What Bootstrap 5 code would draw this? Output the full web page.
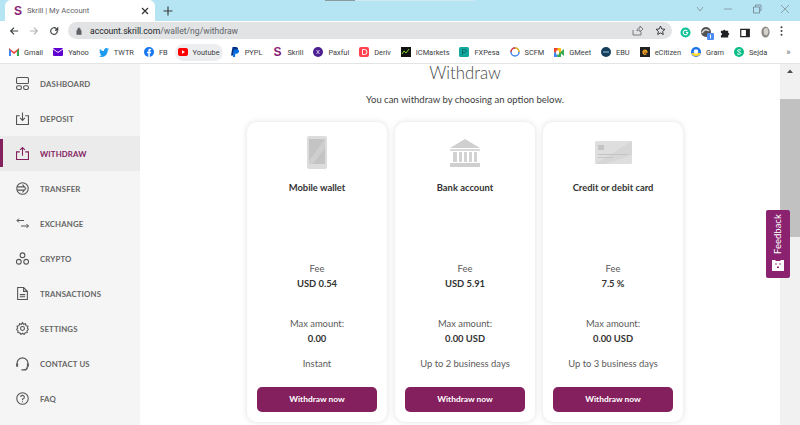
<!DOCTYPE html>
<html lang="en">
<head>
    <meta charset="UTF-8">
    <title>Skrill | My Account</title>
    <link href="https://cdn.jsdelivr.net/npm/bootstrap@5.3.0/dist/css/bootstrap.min.css" rel="stylesheet">
    <style>
        html, body { height: 425px; overflow: hidden; }
        body { font-family: Lato, sans-serif; color: #3c3c3c; background: #fff; }
        .tabstrip { height: 21px; background: #b5e5f2 linear-gradient(to right, #8d9a9e 30px, #cfe9f0 30px) no-repeat 325px 0 / 150px 1px; padding-left: 5px; }
        .tab-item { width: 150px; height: 21px; background: #fff; border-radius: 6px 6px 0 0; padding: 0 6px 0 8px; font: 7.6px Roboto, sans-serif; color: #5f6368; }
        .skrill-s { font: 700 12px "Liberation Sans", sans-serif; color: #8b2274; width: 10px; text-align: center; }
        .newtab { margin-left: 8px; width: 14px; }
        .winctl { margin-left: auto; gap: 18.5px; padding-right: 10px; }
        .toolbar { height: 20px; padding-left: 9px; }
        .navicons { gap: 10px; width: 59px; }
        .omnibox { width: 604px; height: 17px; margin-top: -1px; background: #e1e3e5; border-radius: 9px; padding: 0 6px 0 8px; font: 8.6px Roboto, sans-serif; color: #5f6368; }
        .omnibox b { font-weight: 400; color: #202124; }
        .exticons { padding-left: 8px; }
        .ext-slot { width: 20px; }
        .bookmarks { height: 23px; padding-left: 9px; border-bottom: 1px solid #e3e4e6; font: 7.4px Roboto, sans-serif; color: #3c4043; white-space: nowrap; }
        .bm-item { gap: 5px; margin-right: 10px; height: 17px; }
        .bm-on { background: #eceef0; border-radius: 9px; padding: 0 3px; margin: 0 7px 0 -3px; }
        .bm-more { margin-left: 9px; color: #5f6368; font-size: 9px; }
        .pagewrap { height: 361px; position: relative; }
        .sidemenu { width: 140px; background: #f5f5f5; padding-top: 2px; font: 700 7.8px Lato, sans-serif; letter-spacing: .15px; color: #666; }
        .side-row { height: 35px; padding-left: 16px; gap: 11px; position: relative; }
        .side-row.on { background: #ebebeb; color: #85205f; }
        .side-row.on::before { content: ""; position: absolute; left: 0; top: 3px; bottom: 4px; width: 2.5px; background: #85205f; }
        .mainpane { width: 640px; padding-left: 10px; text-align: center; }
        .pagetitle { font: 300 16.8px Lato, sans-serif; color: #4a4a4a; margin: -1px 0 0; line-height: 20px; }
        .pagesub { font-size: 9.5px; line-height: 14px; margin: 10px 0 0; }
        .optlist { gap: 8px; margin: 15px 0 0 97px; }
        .optcard { width: 140px; height: 300px; border: 0; border-radius: 10px; box-shadow: 0 0 6px rgba(0,0,0,.13); padding: 0 10px; font-size: 9.4px; color: #5a5a5a; }
        .opticon { height: 33px; margin-top: 14px; }
        .opttitle { font-weight: 700; color: #333; line-height: 14px; margin-top: 12px; height: 81px; }
        .optline { line-height: 14px; }
        .optval { font-weight: 700; color: #333; line-height: 14px; margin-top: 1px; }
        .gap-fee { height: 26px; }
        .gap-max { height: 11px; }
        .btn-wd { height: 25px; width: 120px; margin-top: 16px; padding: 0; background: #85205f; border: 0; border-radius: 5px; color: #fff; font-size: 8.4px; font-weight: 700; }
        .scrolltrack { width: 20px; background: #f1f1f1; }
        .scroll-up { display: block; margin: 4px auto 0; }
        .scrollthumb { height: 138px; margin-top: 25px; background: #c1c1c1; }
        .feedback-tab { position: absolute; right: 10px; top: 146px; width: 24px; height: 68px; background: #8a2270; border-radius: 2px; color: #fff; font-size: 9.5px; padding-top: 8px; }
        .feedback-tab span { writing-mode: vertical-rl; transform: rotate(180deg); line-height: 24px; height: 36px; }
        .feedback-face { margin-top: 6px; }
    </style>
</head>
<body>
<div class="tabstrip d-flex align-items-end">
    <div class="tab-item d-flex align-items-center">
        <span class="skrill-s">S</span><span class="flex-grow-1 ps-1">Skrill | My Account</span>
        <svg width="8" height="8" viewBox="0 0 8 8"><path d="M1 1l6 6M7 1L1 7" stroke="#303134" stroke-width="1.2"/></svg>
    </div>
    <div class="newtab align-self-center d-flex">
        <svg width="10" height="10" viewBox="0 0 10 10"><path d="M5 .5v9M.5 5h9" stroke="#3c4043" stroke-width="1.2"/></svg>
    </div>
    <div class="winctl d-flex align-items-center align-self-start pt-1">
        <svg width="10" height="10" viewBox="0 0 10 10"><path d="M2 3l3 4 3-4" fill="none" stroke="#8aa2ab"/></svg>
        <svg width="10" height="10" viewBox="0 0 10 10"><path d="M1 5h8" stroke="#8aa2ab"/></svg>
        <svg width="10" height="10" viewBox="0 0 10 10"><path d="M1.500 3h6v6h-6zM3.500 3V1h5.500v5.500H7.500" fill="none" stroke="#7d959e"/></svg>
        <svg width="10" height="10" viewBox="0 0 10 10"><path d="M1 1l8 8M9 1L1 9" stroke="#8aa2ab"/></svg>
    </div>
</div>
<div class="toolbar d-flex align-items-center">
    <div class="navicons d-flex align-items-center">
        <svg width="10" height="10" viewBox="0 0 12 12"><path d="M11 6H2M6 2L2 6l4 4" fill="none" stroke="#3c4043" stroke-width="1.4"/></svg>
        <svg width="10" height="10" viewBox="0 0 12 12"><path d="M1 6h9M6 2l4 4-4 4" fill="none" stroke="#b4b6b8" stroke-width="1.4"/></svg>
        <svg width="10" height="10" viewBox="0 0 12 12"><path d="M10 6a4 4 0 1 1-1.200-2.800L10.500 5M10.500 1.500V5H7" fill="none" stroke="#3c4043" stroke-width="1.4"/></svg>
    </div>
    <div class="omnibox d-flex align-items-center">
        <svg class="me-1" width="6" height="8" viewBox="0 0 7 9"><path d="M1 4h5v4.500H1zM2 4V2.500a1.500 1.500 0 0 1 3 0V4" fill="#5f6368" stroke="#5f6368" stroke-width=".8"/></svg>
        <span class="flex-grow-1 ps-1"><b>account.skrill.com</b>/wallet/ng/withdraw</span>
        <svg class="me-2" width="11" height="11" viewBox="0 0 11 11"><path d="M1 5v5h8V7M5 6c0-2 1-3 3-3V1l3 3-3 3V5C6.500 5 5.500 5.500 5 6z" fill="none" stroke="#5f6368" stroke-width=".8"/></svg>
        <svg class="ms-1" width="11" height="11" viewBox="0 0 11 11"><path d="M5.500 1l1.300 3 3.200.3-2.400 2.100.7 3.100-2.800-1.600-2.800 1.600.7-3.100L1 4.300 4.200 4z" fill="none" stroke="#3c4043"/></svg>
    </div>
    <div class="exticons d-flex align-items-center">
        <div class="ext-slot"><svg width="11" height="11" viewBox="0 0 12 12"><circle cx="6" cy="6" r="5.500" fill="#15c39a"/><path d="M8 4.500A2.500 2.500 0 1 0 8.500 6H6.500" fill="none" stroke="#fff" stroke-width="1.100"/></svg></div>
        <div class="ext-slot"><svg width="14" height="14" viewBox="0 0 14 14"><circle cx="6" cy="6" r="5" fill="#555"/><path d="M2 7c2-4 5-4 7-2" fill="none" stroke="#ddd" stroke-width="1.500"/><rect x="7" y="7" width="7" height="7" rx="1" fill="#4d8cf5"/><path d="M10.500 8.500v4" stroke="#fff"/></svg></div>
        <div class="ext-slot"><svg width="10" height="10" viewBox="0 0 11 11"><path d="M1 3h2.500a1.200 1.200 0 0 1 2.400 0H9v2.500a1.200 1.200 0 0 1 0 2.400V10.500H1V8a1.200 1.200 0 0 0 0-2.500z" fill="#202124"/></svg></div>
        <div class="ext-slot"><svg width="10" height="10" viewBox="0 0 11 11"><path d="M.8 1.500h9.400v8H.8z" fill="none" stroke="#202124" stroke-width="1.300"/><path d="M6.500 1.500h3.700v8H6.500z" fill="#202124"/></svg></div>
        <div class="ext-slot"><svg width="11" height="13" viewBox="0 0 12 14"><ellipse cx="6" cy="6.500" rx="4.500" ry="6" fill="#8d8a86"/><ellipse cx="6.500" cy="6" rx="2.500" ry="4" fill="#d4d0cb"/></svg></div>
        <svg width="3" height="10" viewBox="0 0 3 11"><circle cx="1.500" cy="1.500" r="1.100" fill="#3c4043"/><circle cx="1.500" cy="5.500" r="1.100" fill="#3c4043"/><circle cx="1.500" cy="9.500" r="1.100" fill="#3c4043"/></svg>
    </div>
</div>
<div class="bookmarks d-flex align-items-center">
    <div class="bm-item d-flex align-items-center"><svg width="10" height="8" viewBox="0 0 10 8"><path d="M0 8V0l5 4 5-4v8H8V3.500L5 6 2 3.500V8z" fill="#ea4335"/><path d="M0 8V1l2 2v5z" fill="#4285f4"/><path d="M8 8V3l2-2v7z" fill="#34a853"/></svg><span>Gmail</span></div>
    <div class="bm-item d-flex align-items-center"><svg width="10" height="8" viewBox="0 0 10 8"><rect width="10" height="8" rx="1" fill="#5f01d1"/><path d="M0 1l5 3.500L10 1" fill="none" stroke="#fff" stroke-width=".9"/></svg><span>Yahoo</span></div>
    <div class="bm-item d-flex align-items-center"><svg width="10" height="9" viewBox="0 0 10 9"><path d="M10 1.200L8.800 2C8.800 6 6 9 3 9 1.800 9 .8 8.700 0 8c1 .1 2-.2 2.800-.8C2 7 1.300 6.600 1 5.700h.9C1 5.300.5 4.500.5 3.500l.9.300C.6 3 .4 1.800 1 .9c1 1.300 2.400 2 4 2.100C4.800 1.400 6 0 7.200 0c.7 0 1.200.3 1.600.7L10 .3l-.6 1z" fill="#1d9bf0"/></svg><span>TWTR</span></div>
    <div class="bm-item d-flex align-items-center"><svg width="10" height="10" viewBox="0 0 10 10"><circle cx="5" cy="5" r="5" fill="#1877f2"/><path d="M4.300 10V6.300H3V4.800h1.300V3.700C4.300 2.400 5 1.800 6.200 1.800l1 .1v1.300h-.6c-.6 0-.8.300-.8.800v.8h1.400L7 6.300H5.800V10z" fill="#fff"/></svg><span>FB</span></div>
    <div class="bm-item bm-on d-flex align-items-center"><svg width="10" height="8" viewBox="0 0 10 8"><rect width="10" height="8" rx="2" fill="#f00"/><path d="M4 2.200L7 4 4 5.800z" fill="#fff"/></svg><span>Youtube</span></div>
    <div class="bm-item d-flex align-items-center"><svg width="10" height="10" viewBox="0 0 10 10"><path d="M2.500 0h3.300c1.700 0 2.500 1 2.200 2.400C7.700 4 6.500 5 5 5H3.800l-.6 3.500H1z" fill="#003087"/><path d="M3.800 2.500h3.500C8.800 2.500 9.300 3.600 9 4.800 8.700 6 7.700 6.800 6.300 6.800H5.300L4.900 10H2.900z" fill="#0070e0"/></svg><span>PYPL</span></div>
    <div class="bm-item d-flex align-items-center"><span class="skrill-s">S</span><span>Skrill</span></div>
    <div class="bm-item d-flex align-items-center"><svg width="10" height="10" viewBox="0 0 10 10"><circle cx="5" cy="5" r="5" fill="#4b1f8f"/><path d="M3.500 3l3 4M6.500 3l-3 4" stroke="#c9b6ec"/></svg><span>Paxful</span></div>
    <div class="bm-item d-flex align-items-center"><svg width="10" height="10" viewBox="0 0 10 10"><rect width="10" height="10" rx="2" fill="#ff444f"/><path d="M3.500 2.500h2a2.500 2.500 0 0 1 0 5h-2z" fill="none" stroke="#fff"/></svg><span>Deriv</span></div>
    <div class="bm-item d-flex align-items-center"><svg width="10" height="10" viewBox="0 0 10 10"><rect width="10" height="10" fill="#111"/><path d="M1 7l2-3 2 2 3-4" fill="none" stroke="#7ed321"/></svg><span>ICMarkets</span></div>
    <div class="bm-item d-flex align-items-center"><svg width="10" height="10" viewBox="0 0 10 10"><rect width="10" height="10" rx="1.500" fill="#13a89e"/><path d="M3.500 8V2.500h2.200a1.300 1.300 0 0 1 0 3H3.500" fill="none" stroke="#0b6e68"/></svg><span>FXPesa</span></div>
    <div class="bm-item d-flex align-items-center"><svg width="10" height="10" viewBox="0 0 10 10"><circle cx="5" cy="5" r="4" fill="none" stroke="#4285f4" stroke-width="1.500"/><path d="M1 5a4 4 0 0 1 4-4" fill="none" stroke="#ea4335" stroke-width="1.500"/><path d="M5 1a4 4 0 0 1 4 4" fill="none" stroke="#fbbc05" stroke-width="1.500"/></svg><span>SCFM</span></div>
    <div class="bm-item d-flex align-items-center"><svg width="10" height="9" viewBox="0 0 10 9"><rect width="7" height="9" rx="1" fill="#fbbc05"/><rect width="3.500" height="4.500" fill="#ea4335"/><rect y="4.500" width="3.500" height="4.500" fill="#4285f4"/><rect x="3.500" y="4.500" width="3.500" height="4.500" fill="#34a853"/><rect x="2.200" y="2.500" width="2.800" height="4" fill="#fff"/><path d="M7 3.500L10 1v7L7 5.500z" fill="#34a853"/></svg><span>GMeet</span></div>
    <div class="bm-item d-flex align-items-center"><svg width="10" height="10" viewBox="0 0 10 10"><circle cx="5" cy="5" r="5" fill="#153e5c"/><path d="M2 5h6" stroke="#9fc2d8"/></svg><span>EBU</span></div>
    <div class="bm-item d-flex align-items-center"><svg width="10" height="10" viewBox="0 0 10 10"><rect width="10" height="10" fill="#222"/><path d="M3 5h4a2 2 0 1 0-.6 1.700" fill="none" stroke="#f5a623" stroke-width="1.300"/></svg><span>eCitizen</span></div>
    <div class="bm-item d-flex align-items-center"><svg width="10" height="10" viewBox="0 0 10 10"><circle cx="5" cy="5" r="5" fill="#1a73e8"/><path d="M.3 6h9.400A5 5 0 0 1 .3 6z" fill="#fdd835"/><circle cx="5" cy="4.500" r="2.300" fill="#fff"/></svg><span>Gram</span></div>
    <div class="bm-item d-flex align-items-center"><svg width="10" height="10" viewBox="0 0 10 10"><circle cx="5" cy="5" r="5" fill="#0bbd87"/><path d="M7 3.300C6 2.500 3.500 2.500 3.500 3.800S6.800 5 6.800 6.300 4 7.500 3 6.700" fill="none" stroke="#fff"/></svg><span>Sejda</span></div>
    <span class="bm-more">»</span>
</div>
<div class="pagewrap d-flex">
    <nav class="sidemenu">
        <div class="side-row d-flex align-items-center"><svg width="13" height="13" viewBox="0 0 12 12" fill="none" stroke="#555" stroke-width="1"><rect x=".5" y=".5" width="11" height="5.500" rx="1"/><rect x=".5" y="8" width="4.500" height="3.500" rx="1.500"/><rect x="7" y="8" width="4.500" height="3.500" rx="1.500"/></svg><span>DASHBOARD</span></div>
        <div class="side-row d-flex align-items-center"><svg width="13" height="13" viewBox="0 0 12 12" fill="none" stroke="#555" stroke-width="1"><path d="M3.500 3.500H.5v8h11v-8h-3M6 .5v7M3.800 5.500L6 7.800l2.200-2.300"/></svg><span>DEPOSIT</span></div>
        <div class="side-row on d-flex align-items-center"><svg width="13" height="13" viewBox="0 0 12 12" fill="none" stroke="#85205f" stroke-width="1"><path d="M3.500 4.500H.5v7h11v-7h-3M6 8V.5M3.800 2.700L6 .5l2.200 2.200"/></svg><span>WITHDRAW</span></div>
        <div class="side-row d-flex align-items-center"><svg width="13" height="13" viewBox="0 0 12 12" fill="none" stroke="#555" stroke-width="1"><circle cx="6" cy="6" r="5.300"/><path d="M1 4.500h6.500M1 7.500h6.500M6 2.500L9 6 6 9.500"/></svg><span>TRANSFER</span></div>
        <div class="side-row d-flex align-items-center"><svg width="13" height="13" viewBox="0 0 13 12" fill="none" stroke="#555" stroke-width="1"><path d="M8 3H1M3 1L1 3l2 2M5 8.500h7.500M10.500 6.500l2 2-2 2"/></svg><span>EXCHANGE</span></div>
        <div class="side-row d-flex align-items-center"><svg width="13" height="13" viewBox="0 0 12 12" fill="none" stroke="#555" stroke-width="1"><circle cx="6" cy="3" r="2.200"/><circle cx="2.600" cy="9" r="2.200"/><circle cx="9.400" cy="9" r="2.200"/></svg><span>CRYPTO</span></div>
        <div class="side-row d-flex align-items-center"><svg width="13" height="13" viewBox="0 0 12 12" fill="none" stroke="#555" stroke-width="1"><path d="M1.500.5h5.500l3.500 3.500v7.500h-9zM7 .5V4h3.500M3.500 7h5M3.500 9h5"/></svg><span>TRANSACTIONS</span></div>
        <div class="side-row d-flex align-items-center"><svg width="13" height="13" viewBox="0 0 12 12" fill="none" stroke="#555" stroke-width="1"><circle cx="6" cy="6" r="1.800"/><path d="M6 .5l1 1.600 1.800-.5.400 1.800 1.800.5-.5 1.800L11.500 7l-1.400 1 .2 1.800-1.800.2-1 1.500L6 10.400 4.500 11.500l-1-1.500-1.800-.2.200-1.800L.5 7l1-1.300L1 3.900l1.800-.5.400-1.800 1.800.5z"/></svg><span>SETTINGS</span></div>
        <div class="side-row d-flex align-items-center"><svg width="13" height="14" viewBox="0 0 12 13" fill="none" stroke="#555" stroke-width="1"><path d="M1.500 8A5 5 0 1 1 10.500 8"/><path d="M1 6v3M11 6v3" stroke-width="1.800"/><path d="M10.500 9c0 2-1.500 3-3.500 3H5" stroke-width="1.300"/></svg><span>CONTACT US</span></div>
        <div class="side-row d-flex align-items-center"><svg width="13" height="13" viewBox="0 0 12 12" fill="none" stroke="#555" stroke-width="1"><circle cx="6" cy="6" r="5.300"/><path d="M4.300 4.700A1.700 1.700 0 1 1 6 6.500V7.500M6 8.500v1"/></svg><span>FAQ</span></div>
    </nav>
    <main class="mainpane">
        <h1 class="pagetitle">Withdraw</h1>
        <p class="pagesub">You can withdraw by choosing an option below.</p>
        <div class="optlist d-flex">
            <div class="card optcard align-items-center">
                <div class="opticon d-flex align-items-center"><svg width="20" height="33" viewBox="0 0 20 33"><rect width="20" height="33" rx="2" fill="#dcdcdc"/><rect x="2" y="3" width="16" height="25" fill="#c4c4c4"/><path d="M18 3v9L6 28H2v-3z" fill="#cfcfcf"/></svg></div>
                <div class="opttitle">Mobile wallet</div>
                <div class="optline">Fee</div><div class="optval">USD 0.54</div>
                <div class="gap-fee"></div>
                <div class="optline">Max amount:</div><div class="optval">0.00</div>
                <div class="gap-max"></div>
                <div class="optline">Instant</div>
                <button class="btn btn-wd">Withdraw now</button>
            </div>
            <div class="card optcard align-items-center">
                <div class="opticon d-flex align-items-center"><svg width="30" height="28" viewBox="0 0 30 28"><path d="M15 0l15 9H0z" fill="#cfcfcf"/><rect y="10" width="30" height="2" fill="#d8d8d8"/><path d="M3 13h4v10H3zM9 13h3v10H9zM14 13h3v10h-3zM19 13h3v10h-3zM24 13h3v10h-3z" fill="#d2d2d2"/><rect y="24" width="30" height="4" fill="#cfcfcf"/></svg></div>
                <div class="opttitle">Bank account</div>
                <div class="optline">Fee</div><div class="optval">USD 5.91</div>
                <div class="gap-fee"></div>
                <div class="optline">Max amount:</div><div class="optval">0.00 USD</div>
                <div class="gap-max"></div>
                <div class="optline">Up to 2 business days</div>
                <button class="btn btn-wd">Withdraw now</button>
            </div>
            <div class="card optcard align-items-center">
                <div class="opticon d-flex align-items-center"><svg width="37" height="23" viewBox="0 0 37 23"><rect width="37" height="23" rx="1.500" fill="#dedede"/><path d="M37 0v14L10 23H0z" fill="#d6d6d6"/><rect x="3" y="4" width="6" height="5" fill="#c4c4c4"/><rect x="3" y="13" width="30" height="1" fill="#c4c4c4"/><rect x="3" y="16" width="15" height="1" fill="#c8c8c8"/></svg></div>
                <div class="opttitle">Credit or debit card</div>
                <div class="optline">Fee</div><div class="optval">7.5 %</div>
                <div class="gap-fee"></div>
                <div class="optline">Max amount:</div><div class="optval">0.00 USD</div>
                <div class="gap-max"></div>
                <div class="optline">Up to 3 business days</div>
                <button class="btn btn-wd">Withdraw now</button>
            </div>
        </div>
    </main>
    <div class="scrolltrack">
        <svg class="scroll-up" width="6" height="6" viewBox="0 0 6 6"><path d="M3 1.500L6 5H0z" fill="#505050"/></svg>
        <div class="scrollthumb"></div>
    </div>
    <div class="feedback-tab d-flex flex-column align-items-center">
        <span>Feedback</span>
        <svg class="feedback-face" width="12" height="11" viewBox="0 0 12 11"><path d="M0 0h3l1 1h4l1-1h3v11H0z" fill="#fff"/><circle cx="4" cy="4" r=".8" fill="#8a2270"/><circle cx="8" cy="4" r=".8" fill="#8a2270"/><path d="M5 6.500h2v1.500H5z" fill="#8a2270"/></svg>
    </div>
</div>
</body>
</html>
